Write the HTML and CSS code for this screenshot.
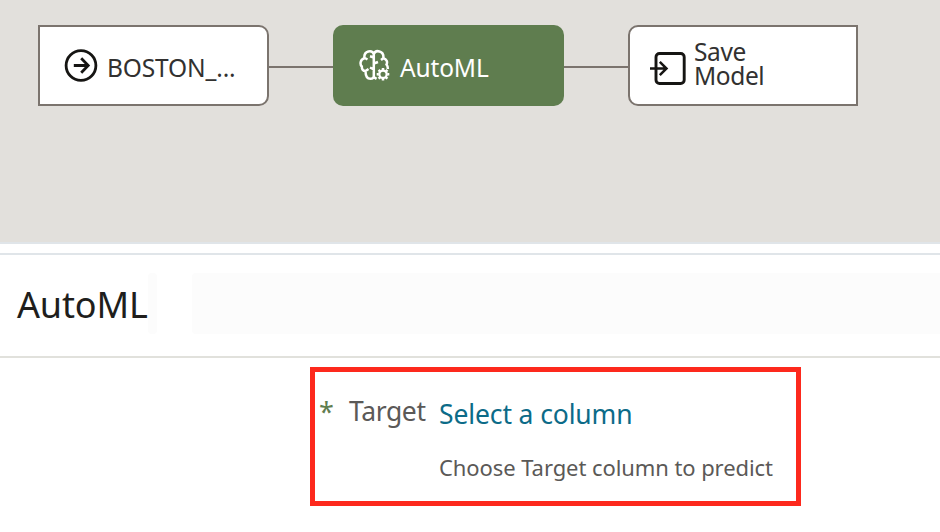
FILE: index.html
```html
<!DOCTYPE html>
<html lang="en">
<head>
<meta charset="utf-8">
<title>AutoML</title>
<link rel="stylesheet" href="styles.css">
</head>
<body>
<main class="canvas">
  <div class="node source">
    <svg class="icon" width="34" height="34" viewBox="0 0 34 34" fill="none" stroke="#161513" stroke-width="2.8"><circle cx="17" cy="17.5" r="14.9"/><path d="M9.8 17.5h14M17.2 10.3l7 7.2-7 7.2"/></svg>
    <span class="label">BOSTON_...</span>
  </div>
  <div class="link"></div>
  <div class="node active">
    <svg class="icon" width="32" height="33" viewBox="0 0 32 33" fill="none" stroke="#fff" stroke-width="2.5"><path d="M14.800 5C13.500 1.500 10.800 2.200 9.300 2.500 6.500 3.200 5 5.500 5.400 9.300 1 10.500.8 15.500 2.800 17.500 2.800 20.500 4.500 22 6.500 22c0 5 1.500 7.800 5 7.800 2 0 3.300-1 3.300-2.500V5C16.200 1.500 19 2 20.500 2.500c3 .8 4.200 3.300 3.900 6.800 3.300.8 4.400 3.700 3.100 6.200 1 1.200 1.400 2.500 1.400 4.500M5 8.500l3.500 2M6.500 22l3-2M14.800 8.500l-3.800-1.200M14.800 20.500l-3.800-2M14.800 14.500l4.200-1.500M24.600 9l-2.600 2"/><path d="M14.800 28.200l2.800 1.600"/><circle cx="24" cy="25.300" r="3.700" stroke-width="2.300"/><path d="M24 19v2M24 29.600v2M17.700 25.300h2M28.300 25.300h2M19.600 20.900l1.400 1.400M27 28.300l1.400 1.400M28.400 20.900l-1.400 1.400M21 28.300l-1.400 1.400" stroke-width="2.500"/></svg>
    <span class="label">AutoML</span>
  </div>
  <div class="link"></div>
  <div class="node sink">
    <svg class="icon" width="37" height="35" viewBox="0 0 37 35" fill="none" stroke="#161513" stroke-width="2.900"><rect x="6" y="2.500" width="28.200" height="30" rx="3.500"/><path d="M0 17.500h16.500M9.800 10.800l6.700 6.700-6.700 6.700" stroke-width="2.500"/></svg>
    <span class="label two-line"><span>Save</span><span>Model</span></span>
  </div>
</main>
<div class="splitter"></div>
<header class="panel-header">
  <h1>AutoML</h1>
  <div class="handle"></div>
  <div class="toolbar"></div>
</header>
<section class="form">
  <div class="field">
    <span class="required">*</span>
    <label class="name">Target</label>
    <div class="control">
      <a class="select">Select a column</a>
      <p class="hint">Choose Target column to predict</p>
    </div>
  </div>
</section>
</body>
</html>
```

FILE: styles.css
```css
* { box-sizing: border-box; }
body {
  margin: 0;
  height: 532px;
  overflow: hidden;
  background: #fff;
  font-family: "Noto Sans", sans-serif;
}
.canvas {
  display: flex;
  height: 242px;
  padding: 25px 0 0 37.5px;
  background: #e2e0dc;
}
.node {
  display: flex;
  flex: none;
  width: 231px;
  height: 81px;
  border: 2px solid #7b746e;
  background: #fff;
  color: #323130;
}
.source { border-radius: 0 10px 10px 0; }
.sink { width: 230.4px; border-radius: 10px 0 0 10px; }
.active { border: 0; border-radius: 10px; background: #5f7d4f; color: #fff; }
.icon { flex: none; display: block; }
.label { font-size: 24.5px; line-height: 34px; letter-spacing: -0.15px; white-space: nowrap; }
.source .icon { margin: 21px 0 0 24.5px; }
.source .label { margin: 24px 0 0 9px; }
.active .icon { margin: 24px 0 0 26px; }
.active .label { margin: 26px 0 0 9.5px; }
.sink .icon { margin: 24px 0 0 20px; }
.sink .label { margin: 13px 0 0 7.5px; line-height: 24px; letter-spacing: -0.4px; }
.two-line { display: flex; flex-direction: column; }
.link { flex: none; width: 64px; height: 2px; margin-top: 41px; background: #7b746e; }
.splitter { height: 13px; border-top: 2px solid #e0e5e9; border-bottom: 2px solid #e0e5e9; }
.panel-header {
  display: flex;
  height: 103px;
  border-bottom: 2px solid #e1e1dc;
}
h1 {
  width: 131px;
  margin: 24px 0 0 17px;
  font-size: 36px;
  font-weight: 400;
  line-height: 52px;
  letter-spacing: -0.15px;
  color: #201e1c;
  white-space: nowrap;
}
.handle { width: 9px; height: 61px; margin-top: 18px; border-radius: 4px; background: #fcfcfc; }
.toolbar { flex: 1; height: 61px; margin: 18px 0 0 35px; border-radius: 4px 0 0 4px; background: #fcfcfc; }
.form { padding: 9px 0 0 310px; }
.field {
  display: flex;
  width: 491px;
  height: 139px;
  border: 5px solid #fd291d;
}
.required { width: 34px; padding: 21px 0 0 4px; font-size: 27px; line-height: 38px; color: #5f7d4f; }
.name { width: 90px; padding-top: 20px; font-size: 26.5px; line-height: 38px; letter-spacing: -0.4px; color: #5b5957; }
.control { padding-top: 23px; white-space: nowrap; }
.select { display: block; font-size: 26.5px; line-height: 38px; letter-spacing: -0.12px; color: #0c6b88; }
.hint { margin: 19px 0 0; font-size: 22px; line-height: 30px; letter-spacing: -0.08px; color: #5b5957; }
```
